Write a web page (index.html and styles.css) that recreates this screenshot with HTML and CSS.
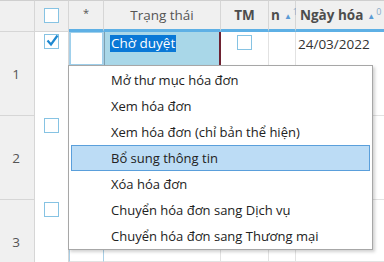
FILE: index.html
```html
<!DOCTYPE html>
<html lang="vi">
<head>
<meta charset="utf-8">
<link rel="stylesheet" href="styles.css">
</head>
<body>
<div class="grid">
  <div class="h c1"></div>
  <div class="h c2"><span class="cb"></span></div>
  <div class="h c3 blue"><span class="star">*</span></div>
  <div class="h c4 blue"><span class="htext">Trạng thái</span></div>
  <div class="h c5 blue"><span class="htext bold">TM</span></div>
  <div class="h c6 blue"><span class="htext bold clip">n</span><span class="sort">▲<sup>1</sup></span></div>
  <div class="h c7 blue"><span class="htext bold">Ngày hóa</span><span class="sort">▲<sup>0</sup></span></div>

  <div class="r c1 num">1</div>
  <div class="r c2"><span class="cb checked"><svg viewBox="0 0 14 14" width="14" height="14"><path d="M2.5 6.5 L6 10.5 L12.5 1.5" fill="none" stroke="#1e88d0" stroke-width="2.2"/></svg></span></div>
  <div class="r c3"><div class="star-ed"></div></div>
  <div class="r c4"><div class="editor"><span class="sel">Chờ duyệt</span></div></div>
  <div class="r c5 center"><span class="cb"></span></div>
  <div class="r c6"></div>
  <div class="r c7"><span class="date">24/03/2022</span></div>

  <div class="r c1 num">2</div>
  <div class="r c2"><span class="cb"></span></div>
  <div class="r c3 bl"></div>
  <div class="r c4"></div>
  <div class="r c5 center"><span class="cb"></span></div>
  <div class="r c6"></div>
  <div class="r c7"><span class="date">24/03/2022</span></div>

  <div class="r c1 num last">3</div>
  <div class="r c2"><span class="cb"></span></div>
  <div class="r c3 bl"></div>
  <div class="r c4"></div>
  <div class="r c5 center"><span class="cb"></span></div>
  <div class="r c6"></div>
  <div class="r c7"><span class="date">24/03/2022</span></div>
</div>

<div class="menu">
  <div class="item">Mở thư mục hóa đơn</div>
  <div class="item">Xem hóa đơn</div>
  <div class="item">Xem hóa đơn (chỉ bản thể hiện)</div>
  <div class="item active">Bổ sung thông tin</div>
  <div class="item">Xóa hóa đơn</div>
  <div class="item">Chuyển hóa đơn sang Dịch vụ</div>
  <div class="item">Chuyển hóa đơn sang Thương mại</div>
</div>
</body>
</html>
```
FILE: styles.css
```css
* { box-sizing: border-box; }
html, body { margin: 0; padding: 0; }
body {
  width: 384px;
  height: 262px;
  overflow: hidden;
  background: #fff;
  font-family: "Open Sans", "Noto Sans", sans-serif;
  font-size: 13.5px;
  color: #333;
  position: relative;
}
.grid {
  display: grid;
  grid-template-columns: 35px 34px 35px 117px 48px 27px 1fr;
  grid-template-rows: 32px 84px 84px 62px;
  width: 384px;
  overflow: hidden;
}
.h {
  background: #f0f0f0;
  border-top: 1px solid #cfcfcf;
  border-right: 1px solid #d6d6d6;
  border-bottom: 1px solid #d6d6d6;
  display: flex;
  align-items: center;
  justify-content: center;
  padding-bottom: 1px;
  color: #555;
}
.h.blue { border-bottom: 3px solid #5eb0e5; padding-bottom: 0; }
.h.c2 { padding-bottom: 2px; }
.htext { font-size: 13.5px; color: #555; }
.bold { font-weight: 700; color: #4d4d4d; }
.c6.h { justify-content: flex-start; padding-left: 2px; }
.c7.h { justify-content: flex-start; padding-left: 4px; border-right: none; }
.star { font-size: 11px; color: #555; margin-top: -6px; }
.sort {
  color: #5b9bd5;
  font-size: 8px;
  margin-left: 4px;
  margin-top: -4px;
}
.sort sup { color: #8aaac8; font-size: 9px; vertical-align: 4px; margin-left: 1px; }
.r {
  border-right: 1px solid #e2e2e2;
  border-bottom: 1px solid #e2e2e2;
  position: relative;
}
.r.c1 {
  background: #f0f0f0;
  border-right: 1px solid #d6d6d6;
  border-bottom: 1px solid #d6d6d6;
}
.r.c1.last { border-bottom: none; padding-top: 22px; }
.r.c7 { border-right: none; }
.r.c2 { border-bottom: none; border-right: 1px solid #d6d6d6; display: flex; justify-content: center; padding-top: 2px; }
.num { display: flex; align-items: center; justify-content: center; color: #555; font-size: 13.5px; padding-right: 2px; }
.center { display: flex; justify-content: center; padding-top: 3px; }
.cb {
  display: block;
  width: 15px;
  height: 15px;
  border: 1px solid #86c3e3;
  background: #fff;
}
.cb.checked { border-color: #86c3e3; position: relative; }
.cb.checked svg { position: absolute; left: 0; top: -1px; }
.r.c3 { border-right: 1px solid #a9cfe6; border-left: 1px solid #a9cfe6; }
.star-ed {
  height: 33px;
  border: 1px solid #9fd0ec;
  background: #fff;
}
.editor {
  height: 34px;
  background: #a9d7e8;
  border-left: 1px solid #7c9fb0;
  border-right: 2px solid #6e2232;
  border-bottom: 1px solid #6e2232;
  margin-right: -1px;
  padding: 2px 0 0 5px;
}
.sel {
  background: #0a78d6;
  color: #fff;
  font-size: 13.5px;
  line-height: 17px;
  display: inline-block;
  padding: 0 1px;
}
.date { display: block; padding: 3px 0 0 2px; color: #333; font-size: 13.5px; }
.menu {
  position: absolute;
  left: 68px;
  top: 65px;
  width: 305px;
  height: 185px;
  background: #fff;
  border: 1px solid #a7a7a7;
  box-shadow: 2px 2px 3px rgba(0,0,0,0.18);
  padding: 1px 2px;
}
.item {
  height: 26px;
  line-height: 24px;
  padding-left: 39px;
  color: #222;
  font-size: 13px;
  border: 1px solid transparent;
}
.item.active {
  background: #bcdcf5;
  border-color: #5a9fdb;
}
```
